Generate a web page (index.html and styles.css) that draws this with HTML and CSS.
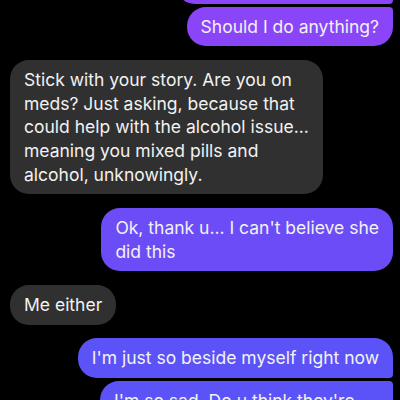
FILE: index.html
```html
<!DOCTYPE html>
<html lang="en">
<head>
    <meta charset="UTF-8">
    <meta name="viewport" content="width=device-width, initial-scale=1.0">
    <title>Chat</title>
    <link rel="stylesheet" href="styles.css">
</head>
<body>
    <div class="thread">
        <!-- mensagens enviadas -->
        <div class="group sent">
            <div class="bubble tone-1 first">What do I say to them?</div>
            <div class="bubble tone-1 last">Should I do anything?</div>
        </div>

        <div class="group received">
            <div class="bubble">Stick with your story. Are you on<br>meds? Just asking, because that<br>could help with the alcohol issue...<br>meaning you mixed pills and<br>alcohol, unknowingly.</div>
        </div>

        <div class="group sent">
            <div class="bubble tone-2">Ok, thank u... I can't believe she<br>did this</div>
        </div>

        <div class="group received">
            <div class="bubble">Me either</div>
        </div>

        <div class="group sent">
            <div class="bubble tone-3 first">I'm just so beside myself right now</div>
            <div class="bubble tone-3 last">I'm so sad. Do u think they're<br>going to come and get me now?</div>
        </div>
    </div>
</body>
</html>
```

FILE: styles.css
```css
body {
    margin: 0;
    background-color: black;
    color: #f2f2f2;
    font-family: Inter, "Noto Sans", sans-serif;
    overflow: hidden;
}
.thread {
    display: flex;
    flex-direction: column;
    gap: 13.5px;
    padding: 0 7px 0 10px;
    margin-top: -36px;
}
.group {
    display: flex;
    flex-direction: column;
    gap: 3px;
}
.sent {
    align-items: flex-end;
}
.received {
    align-items: flex-start;
}
.bubble {
    max-width: 320px;
    box-sizing: border-box;
    padding: 8px 14px;
    font-size: 17.5px;
    line-height: 23.7px;
    white-space: nowrap;
    border-radius: 19px;
    background-color: #303030;
}
.tone-1 {
    background-color: #8a45f8;
}
.tone-2 {
    background-color: #6c4cf6;
}
.tone-3 {
    background-color: #5b52f7;
}
.sent .first {
    border-bottom-right-radius: 4px;
}
.sent .last {
    border-top-right-radius: 4px;
}
```
